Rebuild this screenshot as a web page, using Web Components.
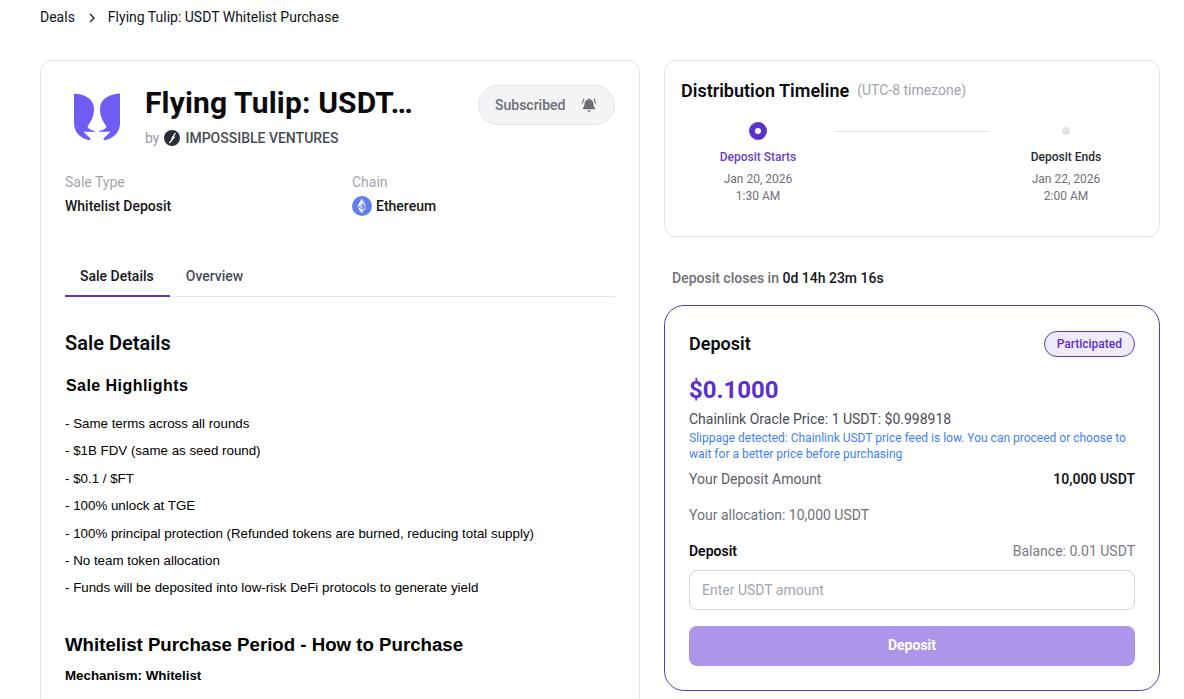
<!DOCTYPE html>
<html lang="en">
<head>
<meta charset="utf-8">
<title>Flying Tulip: USDT Whitelist Purchase</title>
<style>
  html, body { margin: 0; height: 100%; overflow: hidden; background: #fff; }
  body { font-family: Roboto, "Liberation Sans", sans-serif; color: #111; }
</style>
</head>
<body>
<deal-page>
  <deal-breadcrumb slot="crumbs"></deal-breadcrumb>
  <deal-summary slot="left"></deal-summary>
  <deal-timeline slot="right"></deal-timeline>
  <deal-countdown slot="right"></deal-countdown>
  <deposit-card slot="right"></deposit-card>
</deal-page>

<script>
class DealPage extends HTMLElement {
  connectedCallback() {
    this.attachShadow({ mode: 'open' });
    this.shadowRoot.innerHTML = `
      <style>
        :host { display: block; padding: 0 24px 0 40px; }
        .columns { display: grid; grid-template-columns: 600px 496px; gap: 24px; align-items: start; }
        .right { display: flex; flex-direction: column; }
      </style>
      <slot name="crumbs"></slot>
      <div class="columns">
        <div><slot name="left"></slot></div>
        <div class="right"><slot name="right"></slot></div>
      </div>
    `;
  }
}
customElements.define('deal-page', DealPage);

class DealBreadcrumb extends HTMLElement {
  connectedCallback() {
    this.attachShadow({ mode: 'open' });
    this.shadowRoot.innerHTML = `
      <style>
        :host { display: flex; align-items: center; height: 34px; margin-bottom: 26px; font-size: 14px; color: #111318; }
        svg { width: 10px; height: 10px; margin: 1px 11px 0 12px; }
      </style>
      <span>Deals</span>
      <svg viewBox="0 0 10 10" fill="none" stroke="#222" stroke-width="1.4"><path d="M3 1l4 4-4 4"/></svg>
      <span>Flying Tulip: USDT Whitelist Purchase</span>
    `;
  }
}
customElements.define('deal-breadcrumb', DealBreadcrumb);

class DealSummary extends HTMLElement {
  connectedCallback() {
    this.attachShadow({ mode: 'open' });
    this.shadowRoot.innerHTML = `
      <style>
        :host { display: block; box-sizing: border-box; border: 1px solid #e5e6ea; border-radius: 12px; padding: 24px; height: 800px; background: #fff; }
        .head { display: flex; align-items: flex-start; height: 64px; }
        .logo { width: 80px; height: 64px; flex: none; }
        .logo svg { display: block; margin: 7px 0 0 7px; width: 50px; height: 50px; }
        .info { flex: 1; min-width: 0; }
        h1 { margin: -1px 0 0; font-size: 30px; line-height: 38px; font-weight: 700; letter-spacing: .15px; color: #0a0a0f; white-space: nowrap; }
        .by { display: flex; align-items: center; margin-top: 6px; font-size: 14px; line-height: 20px; color: #9b9ca6; }
        .by svg { width: 16px; height: 16px; margin: 0 5px; }
        .by b { font-weight: 500; color: #4a4b55; }
        .sub { flex: none; box-sizing: border-box; width: 137px; height: 40px; padding: 0 16px; display: flex; align-items: center; justify-content: space-between; border: 1px solid #e5e6ea; border-radius: 20px; background: #f3f4f6; font-size: 14px; font-weight: 500; color: #6d6e78; }
        .sub svg { width: 18px; height: 18px; }
        .meta { display: grid; grid-template-columns: 1fr 1fr; gap: 24px; margin-top: 23px; font-size: 14px; line-height: 20px; }
        .label { color: #a3a4ae; margin-bottom: 4px; }
        .value { font-weight: 500; color: #16171d; display: flex; align-items: center; gap: 4px; height: 20px; }
        .value svg { width: 20px; height: 20px; }
        .tabs { display: flex; margin-top: 41px; border-bottom: 1px solid #e5e6ea; font-size: 14px; font-weight: 500; }
        .tab { padding: 0 16px 0 15px; height: 38px; line-height: 38px; color: #4a4b55; margin-bottom: -1px; border-bottom: 2px solid transparent; }
        .tab.on { color: #16171d; border-bottom-color: #5b36b5; }
        .tab + .tab { padding-left: 16px; }
        .prose { margin-top: 34px; color: #000; font-family: "Liberation Sans", Arial, sans-serif; }
        h2 { margin: 0; font: 600 20px/24px Roboto, sans-serif; color: #0a0a0f; }
        h3 { margin: 21px 0 0 1px; font-size: 16px; line-height: 20px; font-weight: 700; letter-spacing: .45px; }
        p { margin: 0; font-size: 13.33px; line-height: 27.4px; }
        .list { margin-top: 14px; }
        h4 { margin: 31px 0 0; font-size: 18.67px; line-height: 24px; font-weight: 700; }
        .mech { margin-top: 9px; font-size: 13.33px; line-height: 20px; font-weight: 700; }
      </style>
      <div class="head">
        <div class="logo">
          <svg viewBox="0 0 50 50" fill="#6f5cf6"><path d="M2 1.500C13 2 22 7 22 17c0 9-4 13-6.500 18C17 37 19.500 38.500 23 39v.7H11.500l7 6.800c.5 1-1 2-2.500 1.500C8 46 2 40 2 31Z"/><path d="M48 1.500C37 2 28 7 28 17c0 9 4 13 6.500 18C33 37 30.500 38.500 27 39v.7h11.500l-7 6.800c-.5 1 1 2 2.500 1.500C42 46 48 40 48 31Z"/></svg>
        </div>
        <div class="info">
          <h1>Flying Tulip: USDT…</h1>
          <div class="by">by
            <svg viewBox="0 0 16 16"><circle cx="8" cy="8" r="8" fill="#2a2e3a"/><path d="M11.500 3 8.300 7.800l1.500-.3L5.500 13" fill="none" stroke="#fff" stroke-width="1.300"/></svg>
            <b>IMPOSSIBLE VENTURES</b>
          </div>
        </div>
        <div class="sub"><span>Subscribed</span>
          <svg viewBox="0 0 18 18" fill="#6d6e78"><path d="M9 2.500c.6 0 1 .4 1 .9 2.300.5 3.500 2.300 3.500 4.600 0 2 .7 3.200 1.700 4.300.3.400.1.900-.4.900H3.200c-.5 0-.7-.5-.4-.9C3.800 11.200 4.500 10 4.500 8c0-2.300 1.200-4.100 3.500-4.600 0-.5.400-.9 1-.9Z"/><path d="M7.500 14.500h3a1.500 1.500 0 0 1-3 0Z"/><path d="M3.800 3 2.500 7M14.200 3l1.300 4" fill="none" stroke="#6d6e78" stroke-width="1.100" stroke-linecap="round"/></svg>
        </div>
      </div>
      <div class="meta">
        <div><div class="label">Sale Type</div><div class="value">Whitelist Deposit</div></div>
        <div><div class="label">Chain</div><div class="value">
          <svg viewBox="0 0 20 20"><circle cx="10" cy="10" r="10" fill="#627eea"/><path d="M10 2.500v5.600l4.700 2.100Z" fill="#c1ccf7"/><path d="M10 2.500 5.300 10.200 10 8.100Z" fill="#fff"/><path d="M10 13.500v4l4.700-6.500Z" fill="#c1ccf7"/><path d="M10 13.500v4L5.300 11Z" fill="#fff"/><path d="M10 12.600l4.700-2.400L10 8.100Z" fill="#8a9ff0"/><path d="M5.300 10.200 10 12.600V8.100Z" fill="#c1ccf7"/></svg>
          <span>Ethereum</span></div></div>
      </div>
      <div class="tabs">
        <div class="tab on">Sale Details</div>
        <div class="tab">Overview</div>
      </div>
      <div class="prose">
        <h2>Sale Details</h2>
        <h3>Sale Highlights</h3>
        <div class="list">
          <p>- Same terms across all rounds</p>
          <p>- $1B FDV (same as seed round)</p>
          <p>- $0.1 / $FT</p>
          <p>- 100% unlock at TGE</p>
          <p>- 100% principal protection (Refunded tokens are burned, reducing total supply)</p>
          <p>- No team token allocation</p>
          <p>- Funds will be deposited into low-risk DeFi protocols to generate yield</p>
        </div>
        <h4>Whitelist Purchase Period - How to Purchase</h4>
        <div class="mech">Mechanism: Whitelist</div>
      </div>
    `;
  }
}
customElements.define('deal-summary', DealSummary);

class DealTimeline extends HTMLElement {
  connectedCallback() {
    this.attachShadow({ mode: 'open' });
    this.shadowRoot.innerHTML = `
      <style>
        :host { display: block; box-sizing: border-box; height: 177px; border: 1px solid #e5e6ea; border-radius: 12px; padding: 15px 16px 16px; background: #fff; }
        .title { display: flex; align-items: center; gap: 8px; height: 28px; }
        .title b { font-size: 18px; font-weight: 600; color: #0a0a0f; }
        .title span { font-size: 14px; color: #a3a4ae; }
        .steps { display: grid; grid-template-columns: 154px 1fr 154px; margin-top: 18px; }
        .step { display: flex; flex-direction: column; align-items: center; }
        .dot { height: 18px; display: flex; align-items: center; justify-content: center; }
        .dot i { display: block; box-sizing: border-box; border-radius: 50%; }
        .on i { width: 18px; height: 18px; border: 6px solid #5b31c9; background: #fff; }
        .off i { width: 8px; height: 8px; background: #e2e3e8; }
        .name { margin-top: 8px; font-size: 12px; line-height: 18px; font-weight: 500; color: #2a2b33; }
        .on + .name { color: #6a3fce; }
        .date { margin-top: 5px; font-size: 12px; line-height: 17px; color: #6f7079; text-align: center; }
        .line { height: 1px; margin-top: 9px; background: #e5e6ea; }
      </style>
      <div class="title"><b>Distribution Timeline</b><span>(UTC-8 timezone)</span></div>
      <div class="steps">
        <div class="step"><div class="dot on"><i></i></div><div class="name">Deposit Starts</div><div class="date">Jan 20, 2026<br>1:30 AM</div></div>
        <div class="line"></div>
        <div class="step"><div class="dot off"><i></i></div><div class="name">Deposit Ends</div><div class="date">Jan 22, 2026<br>2:00 AM</div></div>
      </div>
    `;
  }
}
customElements.define('deal-timeline', DealTimeline);

class DealCountdown extends HTMLElement {
  connectedCallback() {
    this.attachShadow({ mode: 'open' });
    this.shadowRoot.innerHTML = `
      <style>
        :host { display: block; margin: 32px 0 18px 8px; font-size: 14px; line-height: 18px; font-weight: 500; color: #6f7079; }
        b { font-weight: 500; color: #16171d; }
      </style>
      Deposit closes in <b>0d 14h 23m 16s</b>
    `;
  }
}
customElements.define('deal-countdown', DealCountdown);

class DepositCard extends HTMLElement {
  connectedCallback() {
    this.attachShadow({ mode: 'open' });
    this.shadowRoot.innerHTML = `
      <style>
        :host { display: block; box-sizing: border-box; height: 386px; border: 1px solid #5b3db0; border-radius: 20px; padding: 24px; background: #fff; font-size: 14px; color: #4a4b55; }
        .row { display: flex; justify-content: space-between; align-items: center; }
        .top { height: 28px; }
        .top b { font-size: 18px; font-weight: 600; color: #0a0a0f; margin-bottom: 2px; }
        .tag { box-sizing: border-box; height: 26px; padding: 0 12px; line-height: 24px; border: 1px solid #5b3db0; border-radius: 13px; background: #efebfb; font-size: 12px; font-weight: 500; color: #5b31c9; }
        .price { margin-top: 17px; font-size: 24px; line-height: 30px; font-weight: 700; color: #5b31c9; }
        .oracle { margin-top: 4px; line-height: 20px; }
        .slip { margin-top: 1px; font-size: 12px; line-height: 16px; color: #3f82ee; }
        .amount { margin-top: 7px; height: 20px; color: #5d5e68; }
        .amount b { font-weight: 600; color: #16171d; }
        .alloc { margin-top: 16px; line-height: 20px; color: #6f7079; }
        .label { margin-top: 16px; height: 20px; color: #7a7b84; }
        .label b { font-weight: 600; color: #0a0a0f; }
        .input { box-sizing: border-box; margin-top: 9px; height: 40px; padding: 0 12px; display: flex; align-items: center; border: 1px solid #d4d5da; border-radius: 8px; color: #a3a4ae; }
        .btn { box-sizing: border-box; margin-top: 16px; height: 40px; padding-bottom: 2px; display: flex; align-items: center; justify-content: center; border-radius: 8px; background: #ad96e9; color: #fff; font-weight: 700; }
      </style>
      <div class="row top"><b>Deposit</b><span class="tag">Participated</span></div>
      <div class="price">$0.1000</div>
      <div class="oracle">Chainlink Oracle Price: 1 USDT: $0.998918</div>
      <div class="slip">Slippage detected: Chainlink USDT price feed is low. You can proceed or choose to wait for a better price before purchasing</div>
      <div class="row amount"><span>Your Deposit Amount</span><b>10,000 USDT</b></div>
      <div class="alloc">Your allocation: 10,000 USDT</div>
      <div class="row label"><b>Deposit</b><span>Balance: 0.01 USDT</span></div>
      <div class="input">Enter USDT amount</div>
      <div class="btn">Deposit</div>
    `;
  }
}
customElements.define('deposit-card', DepositCard);
</script>
</body>
</html>
